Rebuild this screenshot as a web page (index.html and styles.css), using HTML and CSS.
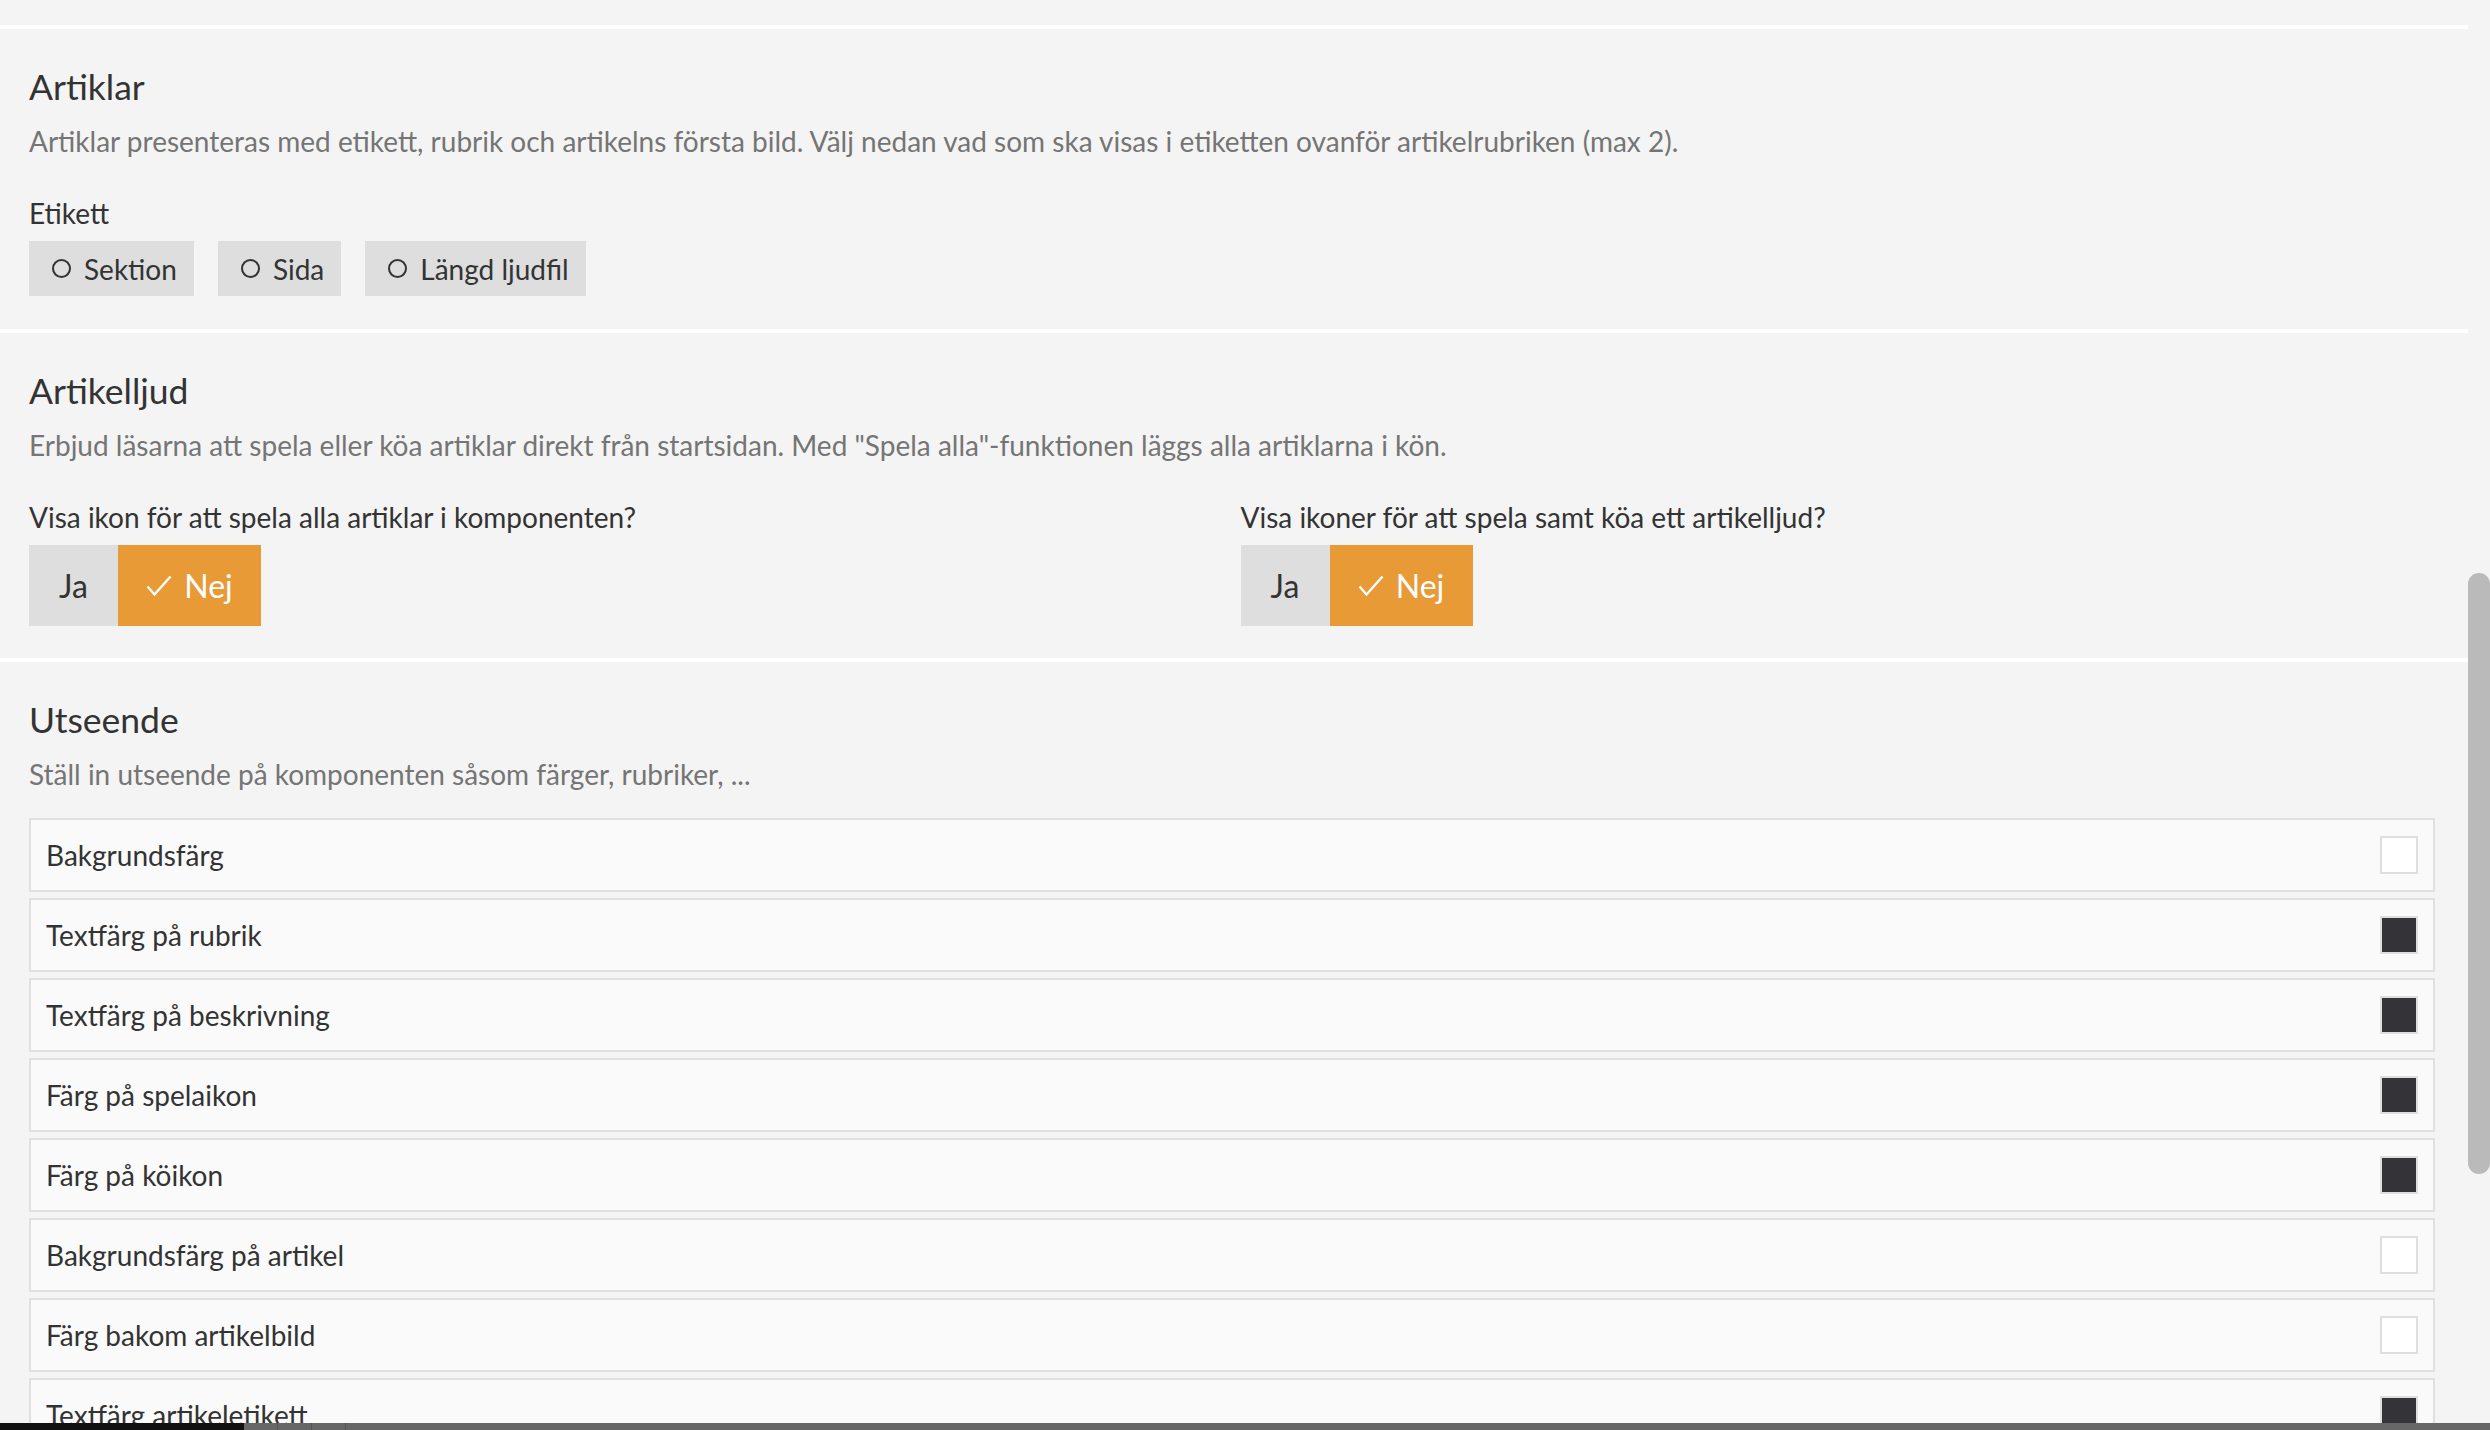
FILE: index.html
```html
<!DOCTYPE html>
<html lang="sv">
<head>
    <meta charset="UTF-8">
    <title>Komponentinställningar</title>
    <link rel="stylesheet" href="styles.css">
</head>
<body>

    <div class="page">
        <div class="content">
            <!-- slutet av föregående sektion -->
            <div class="section section-tail"></div>

            <!-- Artiklar -->
            <div class="section">
                <h2>Artiklar</h2>
                <p class="desc">Artiklar presenteras med etikett, rubrik och artikelns första bild. Välj nedan vad som ska visas i etiketten ovanför artikelrubriken (max 2).</p>
                <div class="field-label">Etikett</div>
                <div class="chip-row">
                    <button class="chip"><span class="chip-dot"></span>Sektion</button>
                    <button class="chip"><span class="chip-dot"></span>Sida</button>
                    <button class="chip"><span class="chip-dot"></span>Längd ljudfil</button>
                </div>
            </div>

            <!-- Artikelljud -->
            <div class="section">
                <h2>Artikelljud</h2>
                <p class="desc">Erbjud läsarna att spela eller köa artiklar direkt från startsidan. Med "Spela alla"-funktionen läggs alla artiklarna i kön.</p>
                <div class="two-cols">
                    <div>
                        <div class="field-label">Visa ikon för att spela alla artiklar i komponenten?</div>
                        <div class="toggle">
                            <button class="toggle-btn">Ja</button>
                            <button class="toggle-btn active">
                                <svg class="check" viewBox="0 0 26 22" width="26" height="22"><polyline points="1.5,11.5 8.5,19.5 24.5,1.5" fill="none" stroke="#fff" stroke-width="2.4"/></svg>Nej
                            </button>
                        </div>
                    </div>
                    <div>
                        <div class="field-label">Visa ikoner för att spela samt köa ett artikelljud?</div>
                        <div class="toggle">
                            <button class="toggle-btn">Ja</button>
                            <button class="toggle-btn active">
                                <svg class="check" viewBox="0 0 26 22" width="26" height="22"><polyline points="1.5,11.5 8.5,19.5 24.5,1.5" fill="none" stroke="#fff" stroke-width="2.4"/></svg>Nej
                            </button>
                        </div>
                    </div>
                </div>
            </div>

            <!-- Utseende -->
            <div class="section">
                <h2>Utseende</h2>
                <p class="desc">Ställ in utseende på komponenten såsom färger, rubriker, ...</p>
                <div class="color-list">
                    <div class="color-row"><span>Bakgrundsfärg</span><span class="swatch light"></span></div>
                    <div class="color-row"><span>Textfärg på rubrik</span><span class="swatch dark"></span></div>
                    <div class="color-row"><span>Textfärg på beskrivning</span><span class="swatch dark"></span></div>
                    <div class="color-row"><span>Färg på spelaikon</span><span class="swatch dark"></span></div>
                    <div class="color-row"><span>Färg på köikon</span><span class="swatch dark"></span></div>
                    <div class="color-row"><span>Bakgrundsfärg på artikel</span><span class="swatch light"></span></div>
                    <div class="color-row"><span>Färg bakom artikelbild</span><span class="swatch light"></span></div>
                    <div class="color-row"><span>Textfärg artikeletikett</span><span class="swatch dark"></span></div>
                    <div class="color-row"><span>Bakgrundsfärg på etikett</span><span class="swatch light"></span></div>
                </div>
            </div>
        </div>

        <!-- scrollbar -->
        <div class="scroll-track">
            <div class="scroll-thumb"></div>
        </div>
    </div>

    <!-- nedre list -->
    <div class="bottom-bar">
        <div class="bottom-bar-start"></div>
        <div class="bottom-bar-tick"></div>
        <div class="bottom-bar-tick"></div>
        <div class="bottom-bar-tick"></div>
    </div>

</body>
</html>
```

FILE: styles.css
```css
html, body {
    margin: 0;
    padding: 0;
    height: 100%;
    overflow: hidden;
}
body {
    background-color: #fff;
    font-family: Lato, "Open Sans", sans-serif;
    color: #333;
}
.page {
    display: flex;
    height: 100vh;
    overflow: hidden;
}
.content {
    flex: 1;
    overflow: hidden;
    background-color: #fff;
}
/* sektioner, separerade av en vit linje */
.section {
    background-color: #f4f4f4;
    margin-bottom: 4px;
    padding: 38px 33px 32px 29px;
}
.section-tail {
    height: 25px;
    padding: 0;
}
h2 {
    margin: 0;
    font-size: 35.5px;
    line-height: 40px;
    font-weight: 400;
    color: #333;
}
.desc {
    margin: 19px 0 0;
    font-size: 28px;
    line-height: 30px;
    color: #757575;
}
.field-label {
    margin-top: 42px;
    font-size: 28px;
    line-height: 30px;
    color: #333;
}
/* etikett-knappar */
.chip-row {
    display: flex;
    gap: 24px;
    margin-top: 13px;
    margin-bottom: 1px;
}
.chip {
    display: flex;
    align-items: center;
    height: 55px;
    padding: 0 17px 0 23px;
    border: none;
    background-color: #dedede;
    font-family: inherit;
    font-size: 28px;
    color: #333;
    cursor: pointer;
}
.chip-dot {
    width: 15px;
    height: 15px;
    border: 2px solid #333;
    border-radius: 50%;
    margin-right: 13px;
}
/* ja/nej */
.two-cols {
    display: grid;
    grid-template-columns: 1fr 1fr;
    column-gap: 17px;
}
.toggle {
    display: flex;
    margin-top: 13px;
}
.toggle-btn {
    display: flex;
    align-items: center;
    justify-content: center;
    height: 81px;
    width: 89px;
    border: none;
    background-color: #dedede;
    font-family: inherit;
    font-size: 32px;
    color: #333;
    cursor: pointer;
}
.toggle-btn.active {
    width: 143px;
    background-color: #e89a37;
    color: #fff;
}
.check {
    margin-right: 12px;
}
/* färglista */
.color-list {
    display: flex;
    flex-direction: column;
    gap: 6px;
    margin-top: 29px;
}
.color-row {
    display: flex;
    align-items: center;
    justify-content: space-between;
    height: 74px;
    box-sizing: border-box;
    padding: 0 15px 0 15px;
    border: 2px solid #e0e0e0;
    background-color: #fafafa;
    font-size: 28px;
    color: #333;
}
.swatch {
    width: 38px;
    height: 38px;
    box-sizing: border-box;
    border: 2px solid #dedede;
}
.swatch.light {
    background-color: #fff;
}
.swatch.dark {
    background-color: #333338;
}
/* scrollbar */
.scroll-track {
    width: 22px;
    background-color: #f4f4f4;
    padding-top: 573px;
}
.scroll-thumb {
    height: 601px;
    border-radius: 11px;
    background-color: #bababa;
}
.bottom-bar {
    position: fixed;
    left: 0;
    right: 0;
    bottom: 0;
    height: 7px;
    display: flex;
    background-color: #676767;
}
.bottom-bar-start {
    width: 244px;
    background-color: #111;
}
.bottom-bar-tick {
    width: 1px;
    margin-left: 33px;
    background-color: #555;
}
.bottom-bar-tick:first-of-type {
    margin-left: 598px;
}
```
